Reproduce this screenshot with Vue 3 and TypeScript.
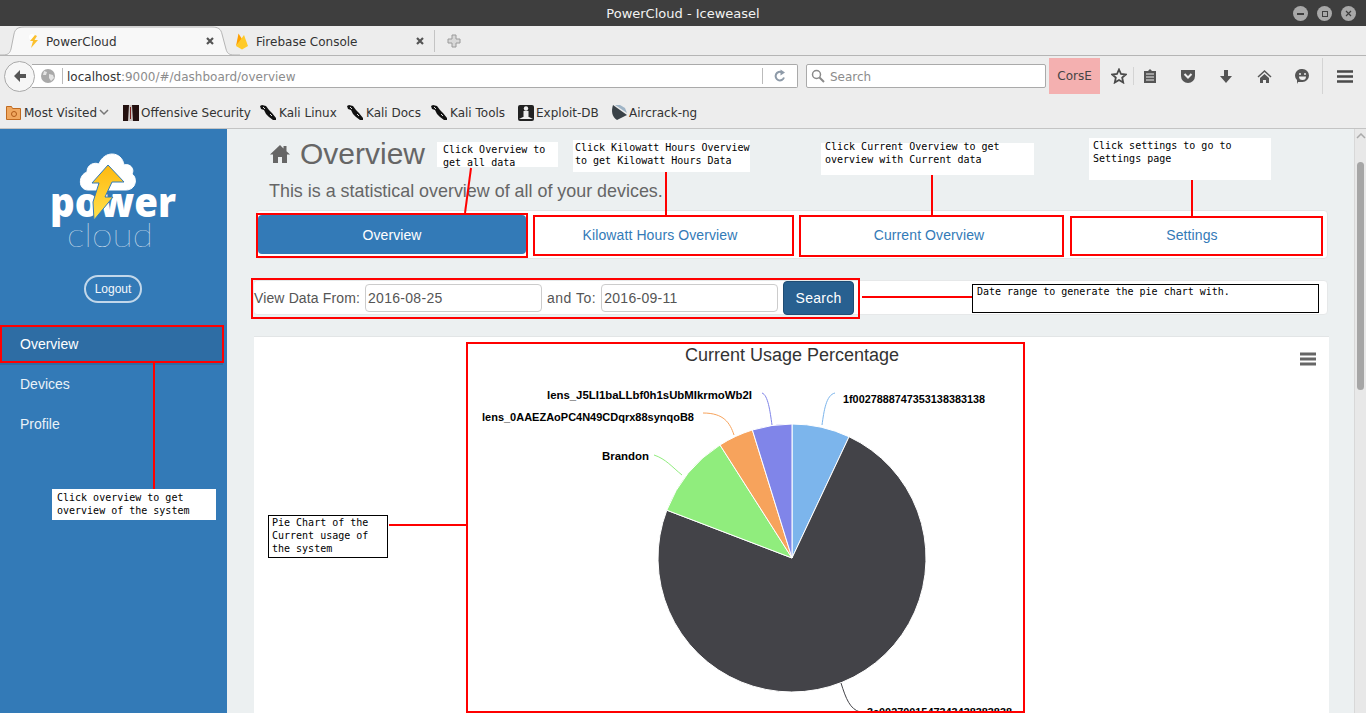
<template>
  <div class="window">
    <header class="titlebar">
      <span class="title">PowerCloud - Iceweasel</span>
      <div class="winbtns">
        <span class="winbtn"><i class="w-min"></i></span>
        <span class="winbtn"><i class="w-max"></i></span>
        <span class="winbtn">
          <svg width="7" height="7" viewBox="0 0 7 7"><path d="M1 1 6 6M6 1 1 6" stroke="#3e3e3e" stroke-width="1.200" /></svg>
        </span>
      </div>
    </header>

    <div class="tabbar">
      <svg class="tabshape" width="240" height="30" viewBox="0 0 240 30">
        <path d="M0 29H3C8 29 10 27 11 23L14 8C15 3 18 1 24 1H212C218 1 221 3 222 8L226 23C227 27 229 29 234 29H240" fill="#f8f8f8" stroke="#b5b5b5" />
      </svg>
      <div class="tab first">
        <svg class="fav" width="16" height="16" viewBox="0 0 16 16">
          <circle cx="6" cy="4" r="3" fill="#fff" />
          <path d="M9 2 4 8h3L5 15l7-8H8.500L11 3z" fill="#fbc02d" />
        </svg>
        <span class="tab-label">PowerCloud</span>
        <svg class="tab-x" width="8" height="8" viewBox="0 0 8 8"><path d="M1 1 7 7M7 1 1 7" stroke="#555" stroke-width="2.200" /></svg>
      </div>
      <div class="tab second">
        <svg class="fav" width="16" height="18" viewBox="0 0 16 18">
          <path d="M2 14 4.500 1.500 8 7z" fill="#ffa000" />
          <path d="M2 14 10 3l4 11-6 3.500z" fill="#ffca28" />
        </svg>
        <span class="tab-label">Firebase Console</span>
        <svg class="tab-x" width="8" height="8" viewBox="0 0 8 8"><path d="M1 1 7 7M7 1 1 7" stroke="#555" stroke-width="2.200" /></svg>
      </div>
      <span class="tab-sep"></span>
      <svg class="newtab" width="14" height="14" viewBox="0 0 14 14">
        <path d="M5 1h4v4h4v4H9v4H5V9H1V5h4z" fill="#d8d8d8" stroke="#9a9a9a" />
      </svg>
    </div>

    <nav class="toolbar">
      <div class="back">
        <svg width="16" height="16" viewBox="0 0 16 16">
          <path d="M8 2 2 8l6 6V10h6V6H8z" fill="#555" />
        </svg>
      </div>
      <div class="urlbar">
        <svg class="globe" width="14" height="14" viewBox="0 0 14 14">
          <circle cx="7" cy="7" r="7" fill="#a9a9a9" />
          <path d="M3 2 6 3 5 6 2 6zM8 5l4 1 1 3-3 3-2-3z" fill="#e4e4e4" />
        </svg>
        <span class="url-sep"></span>
        <span class="url"><b>localhost</b>:9000/#/dashboard/overview</span>
        <span class="url-sep right"></span>
        <svg class="reload" width="14" height="14" viewBox="0 0 14 14">
          <path d="M11 8.500A4.300 4.300 0 1 1 9 3.300" fill="none" stroke="#8d9aa8" stroke-width="2" />
          <path d="M7.500 0.500 12 3.500 7.500 6.500z" fill="#8d9aa8" />
        </svg>
      </div>
      <div class="searchbar">
        <svg width="14" height="14" viewBox="0 0 14 14">
          <circle cx="5.500" cy="5.500" r="4" fill="none" stroke="#8a8a8a" stroke-width="1.500" />
          <path d="M8.500 8.500 13 13" stroke="#8a8a8a" stroke-width="2" />
        </svg>
        <span class="search-text">Search</span>
      </div>
      <div class="corse">CorsE</div>
      <div class="tools">
        <svg class="star" width="16" height="16" viewBox="0 0 16 16">
          <path d="M8 1.500 10 6l4.800.500-3.600 3.200 1 4.800L8 12l-4.200 2.500 1-4.800L1.200 6.500 6 6z" fill="none" stroke="#4a4a4a" stroke-width="1.800" />
        </svg>
        <span class="tool-sep"></span>
        <svg class="list" width="14" height="16" viewBox="0 0 14 16">
          <path d="M1 3h4l2-2 2 2h4v12H1z" fill="#555" />
          <path d="M3 6h8M3 9h8M3 12h8" stroke="#eee" stroke-width="1.200" />
        </svg>
        <svg class="pocket" width="16" height="14" viewBox="0 0 16 14">
          <path d="M1 1h14v6a7 7 0 0 1-14 0z" fill="#555" />
          <path d="M4.500 5 8 8.500 11.500 5" fill="none" stroke="#eee" stroke-width="2" />
        </svg>
        <svg class="down" width="14" height="15" viewBox="0 0 14 15">
          <path d="M5 1h4v6h4l-6 7-6-7h4z" fill="#555" />
        </svg>
        <svg class="homei" width="15" height="15" viewBox="0 0 15 15">
          <path d="M7.500 1 0.500 7.500l1 1L7.500 3l6 5.500 1-1z" fill="#555" />
          <path d="M3 9l4.500-4L12 9v5H9v-3H6v3H3z" fill="#555" />
        </svg>
        <svg class="smile" width="15" height="16" viewBox="0 0 15 16">
          <path d="M7.500 1a6.500 6.500 0 0 1 0 13H3l-1 2v-4A6.500 6.500 0 0 1 7.500 1z" fill="#555" />
          <circle cx="5" cy="6" r="1" fill="#eee" />
          <circle cx="10" cy="6" r="1" fill="#eee" />
          <path d="M4 8.500h7A3.500 3.500 0 0 1 4 8.500z" fill="#eee" />
        </svg>
        <span class="tool-sep tall"></span>
        <svg class="burger" width="16" height="13" viewBox="0 0 16 13">
          <path d="M0 1.500h16M0 6.500h16M0 11.500h16" stroke="#4a4a4a" stroke-width="2.400" />
        </svg>
      </div>
    </nav>

    <div class="bookmarks">
      <div v-for="b in bookmarks" :key="b.label" class="bookmark" :style="{ width: b.width + 'px' }">
        <svg v-if="b.icon === 'folder'" class="folder" width="15" height="15" viewBox="0 0 15 15">
          <path d="M0.500 1.500h5l1 2h8v11H0.500z" fill="#f0a860" stroke="#c06a20" />
          <circle cx="8" cy="9" r="2.500" fill="none" stroke="#b05a18" />
        </svg>
        <svg v-else-if="b.icon === 'offsec'" width="16" height="16" viewBox="0 0 16 16">
          <rect width="16" height="16" fill="#23100f" />
          <path d="M6 0h3l1 16H5z" fill="#c9c2c0" />
          <path d="M7 2h1v12H7z" fill="#7c1e1a" />
        </svg>
        <svg v-else-if="b.icon === 'kali'" width="17" height="16" viewBox="0 0 17 16">
          <path d="M0 1 2 0 6 1 9 5 12 8 16 13 16 15 13 15 9 12 6 9 4 5 1 4z" fill="#111" />
          <path d="M3 2 5 4M10 9l2 2" stroke="#ddd" />
        </svg>
        <svg v-else-if="b.icon === 'exploit'" width="16" height="16" viewBox="0 0 16 16">
          <rect width="16" height="16" rx="2" fill="#222" />
          <circle cx="8" cy="3.500" r="2.200" fill="#eee" />
          <path d="M5.500 6h5v6h-5z" fill="#eee" />
          <path d="M1 14 5 12h6l4 2z" fill="#eee" />
        </svg>
        <svg v-else width="16" height="16" viewBox="0 0 16 16">
          <path d="M2 0 16 10 6 15C1 12 0 6 2 0z" fill="#3a4248" />
          <path d="M4 0 16 8 14 3 9 0z" fill="#9fb4c6" />
        </svg>
        <span>{{ b.label }}</span>
        <svg v-if="b.icon === 'folder'" class="chev" width="10" height="7" viewBox="0 0 10 7">
          <path d="M1 1 5 5 9 1" fill="none" stroke="#777" stroke-width="1.500" />
        </svg>
      </div>
    </div>

    <div class="page">
      <aside class="sidebar">
        <svg class="logo" width="227" height="130" viewBox="0 0 227 130">
          <defs>
            <linearGradient id="bolt" x1="0" y1="0" x2="0" y2="1">
              <stop offset="0" stop-color="#ffb90f" />
              <stop offset="1" stop-color="#ffe14d" />
            </linearGradient>
          </defs>
          <text x="50" y="83" class="logo-power" textLength="126" lengthAdjust="spacingAndGlyphs">power</text>
          <text x="67" y="113" class="logo-cloud" textLength="86" lengthAdjust="spacingAndGlyphs">cloud</text>
          <path d="M88 56C78 56 78 41 87 38 87 30 95 28 99 30 104 16 122 17 124 31 130 29 135 35 132 40 138 44 136 56 126 56Z" fill="#fff" stroke="#fff" />
          <path d="M108 31 92 49H99L93 68 94 86 113 63H105L112 48H124Z" fill="url(#bolt)" stroke="#337ab7" />
        </svg>
        <button class="logout">Logout</button>
        <ul class="sidenav">
          <li class="active">Overview</li>
          <li>Devices</li>
          <li>Profile</li>
        </ul>
      </aside>

      <main class="content">
        <h1 class="heading">
          <svg width="20" height="18" viewBox="0 0 20 18">
            <path d="M10 0 0 9.500h3V18h5v-6h4v6h5V9.500h3l-3.500-3.300V1h-3v2.400z" fill="#666" />
          </svg>
          <span>Overview</span>
        </h1>
        <p class="sub">This is a statistical overview of all of your devices.</p>

        <div class="pills">
          <a class="pill on">Overview</a>
          <a class="pill">Kilowatt Hours Overview</a>
          <a class="pill">Current Overview</a>
          <a class="pill">Settings</a>
        </div>

        <form class="range" @submit.prevent>
          <label class="from">View Data From:</label>
          <input class="date" value="2016-08-25" />
          <label class="to">and To:</label>
          <input class="date" value="2016-09-11" />
          <button class="go">Search</button>
        </form>

        <section class="card">
          <svg class="chart" width="1075" height="400" viewBox="0 0 1075 400">
            <text x="538" y="24" text-anchor="middle" class="chart-title">Current Usage Percentage</text>
            <path v-for="s in slices" :key="s.name" :d="s.d" :fill="s.color" stroke="#fff" stroke-width="1" />
            <path v-for="s in slices" :key="s.name + '-c'" :d="s.conn" :stroke="s.color" fill="none" />
            <text
              v-for="s in slices"
              :key="s.name + '-t'"
              :x="s.x"
              :y="s.y"
              :textLength="s.len"
              lengthAdjust="spacingAndGlyphs"
              class="chart-label"
            >{{ s.name }}</text>
            <path d="M1046 17h16M1046 22h16M1046 27h16" stroke="#666" stroke-width="3" />
          </svg>
        </section>
      </main>

      <div class="scrollbar">
        <svg class="scroll-up" width="10" height="6" viewBox="0 0 10 6">
          <path d="M1 5 5 1 9 5" fill="none" stroke="#aaa" stroke-width="1.500" />
        </svg>
        <div class="thumb"></div>
      </div>
    </div>

    <!-- markup drawn on top of the screenshot -->
    <svg class="marks" width="1366" height="713" viewBox="0 0 1366 713">
      <rect v-for="(r, i) in redBoxes" :key="i" :x="r[0]" :y="r[1]" :width="r[2]" :height="r[3]" fill="none" stroke="#f00" stroke-width="2" />
      <line v-for="(l, i) in redLines" :key="'l' + i" :x1="l[0]" :y1="l[1]" :x2="l[2]" :y2="l[3]" stroke="#f00" stroke-width="2" />
    </svg>
    <div
      v-for="n in notes"
      :key="n.text"
      class="note"
      :class="{ boxed: n.boxed }"
      :style="{ left: n.x + 'px', top: n.y + 'px', width: n.w + 'px', height: n.h + 'px', paddingLeft: n.px + 'px' }"
    >
      <div :style="{ marginTop: n.py + 'px' }">{{ n.text }}</div>
    </div>
  </div>
</template>

<script setup lang="ts">
const cx = 538
const cy = 221
const radius = 134

const polar = (deg: number, r: number) => {
  const a = (deg * Math.PI) / 180
  return [cx + r * Math.sin(a), cy - r * Math.cos(a)]
}

const sliceData = [
  { name: '1f0027888747353138383138', from: 0, to: 25.2, color: '#7cb5ec', conn: 'M568 88C570 74 572 58 581 56', x: 589, y: 66, len: 142 },
  { name: '3c0027001547343438383838', from: 25.2, to: 290.9, color: '#434348', conn: 'M587 346C592 362 596 372 606 375', x: 613, y: 379, len: 145 },
  { name: 'Brandon', from: 290.9, to: 327.5, color: '#90ed7d', conn: 'M428 138C418 130 412 122 400 118', x: 348, y: 123, len: 47 },
  { name: 'lens_0AAEZAoPC4N49CDqrx88synqoB8', from: 327.5, to: 342.8, color: '#f7a35c', conn: 'M480 98C476 86 470 76 449 76', x: 228, y: 84, len: 212 },
  { name: 'lens_J5LI1baLLbf0h1sUbMIkrmoWb2I', from: 342.8, to: 360, color: '#8085e9', conn: 'M518 88C516 74 514 58 508 56', x: 293, y: 62, len: 205 }
]

const slices = sliceData.map((s) => {
  const [x1, y1] = polar(s.from, radius)
  const [x2, y2] = polar(s.to, radius)
  const large = s.to - s.from > 180 ? 1 : 0
  return { ...s, d: `M${cx} ${cy}L${x1} ${y1}A${radius} ${radius} 0 ${large} 1 ${x2} ${y2}Z` }
})

const bookmarks = [
  { label: 'Most Visited', icon: 'folder', width: 117 },
  { label: 'Offensive Security', icon: 'offsec', width: 137 },
  { label: 'Kali Linux', icon: 'kali', width: 87 },
  { label: 'Kali Docs', icon: 'kali', width: 84 },
  { label: 'Kali Tools', icon: 'kali', width: 87 },
  { label: 'Exploit-DB', icon: 'exploit', width: 93 },
  { label: 'Aircrack-ng', icon: 'air', width: 100 }
]

const redBoxes = [
  [1, 326, 222, 36],
  [257, 214, 270, 43],
  [534, 216, 259, 39],
  [800, 216, 263, 40],
  [1071, 217, 251, 38],
  [252, 279, 607, 39],
  [467, 343, 557, 369]
]

const redLines = [
  [154, 362, 154, 489],
  [389, 525, 466, 525],
  [862, 297, 972, 297],
  [471, 168, 465, 213],
  [666, 172, 666, 216],
  [932, 175, 932, 216],
  [1192, 180, 1192, 216]
]

const notes = [
  { text: 'Click Overview to\nget all data', x: 437, y: 142, w: 121, h: 25, px: 6, py: 1, boxed: false },
  { text: 'Click Kilowatt Hours Overview\nto get Kilowatt Hours Data', x: 573, y: 140, w: 177, h: 32, px: 2, py: 1, boxed: false },
  { text: 'Click Current Overview to get\noverview with Current data', x: 821, y: 143, w: 213, h: 32, px: 4, py: -3, boxed: false },
  { text: 'Click settings to go to\nSettings page', x: 1089, y: 138, w: 182, h: 42, px: 4, py: 1, boxed: false },
  { text: 'Date range to generate the pie chart with.', x: 972, y: 284, w: 347, h: 29, px: 4, py: 0, boxed: true },
  { text: 'Click overview to get\noverview of the system', x: 52, y: 489, w: 164, h: 31, px: 5, py: 2, boxed: false },
  { text: 'Pie Chart of the\nCurrent usage of\nthe system', x: 268, y: 515, w: 120, h: 43, px: 3, py: 0, boxed: true }
]
</script>

<style>
html,
body {
  margin: 0;
  overflow: hidden;
}
</style>

<style scoped>
.window {
  position: relative;
  width: 1366px;
  height: 713px;
  overflow: hidden;
  display: flex;
  flex-direction: column;
  font-family: "DejaVu Sans", sans-serif;
  background: #ededed;
}

.titlebar {
  height: 26px;
  flex: none;
  background: #3e3e3e;
  color: #f2f2f2;
  font-size: 13px;
  display: flex;
  align-items: center;
  justify-content: center;
  position: relative;
}
.winbtns {
  position: absolute;
  right: 10px;
  top: 6px;
  display: flex;
  gap: 9px;
}
.winbtn {
  width: 15px;
  height: 15px;
  border-radius: 50%;
  background: #a8a8a8;
  display: flex;
  align-items: center;
  justify-content: center;
}
.w-min {
  width: 7px;
  height: 2px;
  background: #3e3e3e;
}
.w-max {
  width: 4px;
  height: 4px;
  border: 1.5px solid #3e3e3e;
}

.tabbar {
  height: 30px;
  flex: none;
  display: flex;
  align-items: center;
  position: relative;
  border-bottom: 1px solid #b5b5b5;
  box-sizing: border-box;
  padding: 1px 0 0 26px;
}
.tabshape {
  position: absolute;
  left: 0;
  top: 0;
}
.tab {
  position: relative;
  display: flex;
  align-items: center;
  font-size: 12px;
  color: #333;
  box-sizing: border-box;
}
.tab.first {
  width: 208px;
}
.tab.second {
  width: 190px;
}
.tab .fav {
  flex: none;
}
.tab-label {
  margin-left: 4px;
  padding-top: 2px;
  flex: 1;
}
.second .tab-label {
  margin-left: 6px;
}
.tab-x {
  flex: none;
}
.first .tab-x {
  margin-right: 20px;
}
.tab-sep {
  width: 1px;
  height: 22px;
  background: #c4c4c4;
  margin-left: 10px;
}
.newtab {
  margin-left: 12px;
}

.toolbar {
  height: 39px;
  flex: none;
  display: flex;
  align-items: center;
  position: relative;
  padding: 1px 0 0 4px;
  box-sizing: border-box;
}
.back {
  width: 29px;
  height: 29px;
  border-radius: 50%;
  border: 1px solid #a9a9a9;
  background: #f6f6f6;
  display: flex;
  align-items: center;
  justify-content: center;
  z-index: 1;
  flex: none;
}
.urlbar {
  margin-left: -3px;
  width: 766px;
  height: 24px;
  box-sizing: border-box;
  background: #fff;
  border: 1px solid #aaa;
  border-left: none;
  border-radius: 0 2px 2px 0;
  display: flex;
  align-items: center;
  font-size: 12px;
  padding-left: 9px;
  color: #8c8c8c;
}
.globe {
  flex: none;
}
.url-sep {
  width: 1px;
  height: 16px;
  background: #bbb;
  margin: 0 4px 0 7px;
}
.url-sep.right {
  margin: 0 10px 0 0;
}
.url {
  flex: 1;
  padding-top: 2px;
}
.url b {
  font-weight: 400;
  color: #333;
}
.reload {
  margin-right: 10px;
}
.searchbar {
  margin-left: 8px;
  width: 240px;
  height: 24px;
  box-sizing: border-box;
  background: #fff;
  border: 1px solid #aaa;
  border-radius: 2px;
  display: flex;
  align-items: center;
  gap: 5px;
  padding-left: 4px;
  font-size: 12px;
  color: #8c8c8c;
}
.search-text {
  padding-top: 2px;
}
.corse {
  margin-left: 3px;
  width: 51px;
  height: 36px;
  background: #f4b0b0;
  color: #444;
  font-size: 12px;
  display: flex;
  align-items: center;
  justify-content: center;
  flex: none;
}
.tools {
  display: flex;
  align-items: center;
  flex: none;
}
.star {
  margin-left: 11px;
}
.tool-sep {
  width: 1px;
  height: 18px;
  background: #d4d4d4;
  margin-left: 6px;
}
.tool-sep.tall {
  height: 36px;
  margin-left: 12px;
}
.list {
  margin-left: 9px;
}
.pocket {
  margin-left: 23px;
}
.down {
  margin-left: 23px;
}
.homei {
  margin-left: 24px;
}
.smile {
  margin-left: 23px;
}
.burger {
  margin-left: 14px;
}

.bookmarks {
  height: 34px;
  flex: none;
  display: flex;
  align-items: center;
  padding: 2px 0 0 6px;
  box-sizing: border-box;
  border-bottom: 1px solid #c4c4c4;
  font-size: 12px;
  color: #333;
}
.bookmark {
  display: flex;
  align-items: center;
  gap: 2px;
  flex: none;
}
.folder {
  margin-right: 1px;
}
.chev {
  margin-left: 0;
}

.page {
  flex: 1;
  min-height: 0;
  display: flex;
  background: #ecf0f1;
  font-family: "Liberation Sans", sans-serif;
}

.sidebar {
  width: 227px;
  flex: none;
  background: #337ab7;
  display: flex;
  flex-direction: column;
  align-items: center;
}
.logo {
  flex: none;
  margin-top: 5px;
}
.logo-power {
  font-family: "Open Sans", sans-serif;
  font-weight: 800;
  font-size: 41px;
  fill: #fff;
}
.logo-cloud {
  font-family: Lato, sans-serif;
  font-weight: 100;
  font-size: 34px;
  fill: #fff;
}
.logout {
  margin: 11px 1px 0 0;
  width: 58px;
  height: 28px;
  border-radius: 14px;
  border: 2px solid rgba(255, 255, 255, 0.7);
  background: transparent;
  color: #f4f8fb;
  font-family: "Liberation Sans", sans-serif;
  font-size: 12px;
  padding: 0;
}
.sidenav {
  list-style: none;
  margin: 22px 0 0;
  padding: 0;
  width: 100%;
  color: #eaf2f8;
  font-size: 14px;
}
.sidenav li {
  height: 40px;
  line-height: 38px;
  padding-left: 20px;
  box-sizing: border-box;
}
.sidenav li.active {
  background: #2e6da4;
  width: 223px;
  color: #fff;
}

.content {
  flex: 1;
  min-width: 0;
  padding: 0 27px 0 26px;
}
.heading {
  margin: 7px 0 0 17px;
  height: 36px;
  display: flex;
  align-items: center;
  gap: 10px;
  font-size: 30px;
  font-weight: 400;
  color: #666;
}
.sub {
  margin: 7px 0 0 16px;
  font-size: 17.900px;
  line-height: 24px;
  color: #666;
}

.pills {
  margin: 7px -1px 0 3px;
  height: 49px;
  box-sizing: border-box;
  background: #fff;
  border: 1px solid #e2e5e6;
  border-radius: 4px;
  padding: 4px 1px;
  display: grid;
  grid-template-columns: 268px 268px 270px 256px;
  font-size: 14px;
  letter-spacing: 0.1px;
}
.pill {
  display: flex;
  align-items: center;
  justify-content: center;
  border-radius: 4px;
  color: #337ab7;
}
.pill.on {
  background: #337ab7;
  color: #fff;
}

.range {
  margin: 21px -1px 0 0;
  height: 35px;
  box-sizing: border-box;
  background: #fff;
  border: 1px solid #e6e8e9;
  border-radius: 4px;
  display: flex;
  align-items: center;
  font-size: 14px;
  color: #555;
}
.from {
  letter-spacing: 0.13px;
}
.to {
  letter-spacing: 0.5px;
}
.date {
  font: inherit;
  letter-spacing: 0.3px;
  color: #555;
  width: 177px;
  height: 28px;
  box-sizing: border-box;
  border: 1px solid #ccc;
  border-radius: 4px;
  padding: 0 2px;
  margin: 0 5px;
  background: #fff;
}
.go {
  font: inherit;
  letter-spacing: 0.3px;
  width: 71px;
  height: 34px;
  background: #286090;
  border: 1px solid #204d74;
  border-radius: 4px;
  color: #fff;
  padding: 0;
}

.card {
  margin: 21px -2px 0 1px;
  height: 420px;
  background: #fff;
  border-top: 1px solid #e2e5e6;
}
.chart {
  display: block;
}
.chart-title {
  font-size: 18px;
  fill: #333;
}
.chart-label {
  font-size: 11px;
  font-weight: 700;
  fill: #000;
}

.scrollbar {
  width: 12px;
  flex: none;
  background: #e8e8e8;
  border-left: 1px solid #d8d8d8;
  box-sizing: border-box;
  position: relative;
}
.scroll-up {
  display: block;
  margin: 4px 0 0 1px;
}
.thumb {
  position: absolute;
  left: 2px;
  top: 33px;
  width: 7px;
  height: 228px;
  border-radius: 4px;
  background: #a6a6a6;
}

.marks {
  position: absolute;
  left: 0;
  top: 0;
  pointer-events: none;
}
.note {
  position: absolute;
  box-sizing: border-box;
  background: #fff;
  color: #000;
  font-family: "DejaVu Sans Mono", monospace;
  font-size: 10px;
  line-height: 13px;
  white-space: pre;
}
.note.boxed {
  border: 1px solid #000;
}
</style>
